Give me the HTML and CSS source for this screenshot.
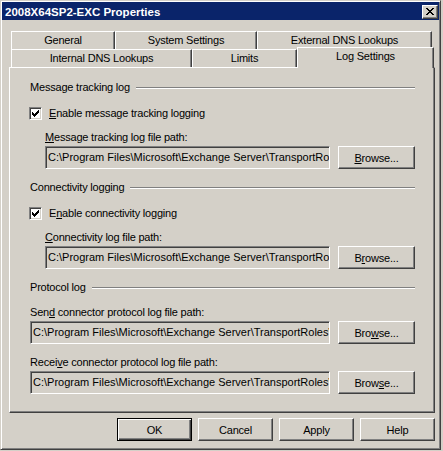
FILE: index.html
```html
<!DOCTYPE html>
<html lang="en">
  <head>
    <meta charset="UTF-8" />
    <meta name="viewport" content="width=device-width, initial-scale=1.0" />
    <title>2008X64SP2-EXC Properties</title>
    <link rel="stylesheet" href="styles.css">
  </head>
  <body>
    <div class="window">
      <div class="titlebar">
        <span class="title">2008X64SP2-EXC Properties</span>
        <span class="close">
          <svg width="8" height="7" viewBox="0 0 8 7" shape-rendering="crispEdges">
            <path d="M0 0h2v1H0z M6 0h2v1H6z M1 1h2v1H1z M5 1h2v1H5z M2 2h4v1H2z M3 3h2v1H3z M2 4h4v1H2z M1 5h2v1H1z M5 5h2v1H5z M0 6h2v1H0z M6 6h2v1H6z" fill="#000" />
          </svg>
        </span>
      </div>

      <div class="client">
        <div class="tab-row">
          <div class="tab tab-general">General</div>
          <div class="tab tab-system">System Settings</div>
          <div class="tab tab-external">External DNS Lookups</div>
        </div>
        <div class="tab-row">
          <div class="tab tab-internal">Internal DNS Lookups</div>
          <div class="tab tab-limits">Limits</div>
          <div class="tab tab-log tab-active">Log Settings</div>
        </div>

        <div class="panel">
          <div class="group">
            <div class="group-title"><span>Message tracking log</span><i class="rule"></i></div>
            <div class="check-row">
              <span class="checkbox">
                <svg width="7" height="7" viewBox="0 0 7 7" shape-rendering="crispEdges">
                  <path d="M6 0h1v1H6z M5 1h2v1H5z M0 2h1v1H0z M4 2h3v1H4z M0 3h2v1H0z M3 3h3v1H3z M0 4h5v1H0z M1 5h3v1H1z M2 6h1v1H2z" fill="#000" />
                </svg>
              </span>
              <span><u>E</u>nable message tracking logging</span>
            </div>
            <div class="indent">
              <div class="field-label"><u>M</u>essage tracking log file path:</div>
              <div class="field-row">
                <div class="field">C:\Program Files\Microsoft\Exchange Server\TransportRoles\Logs\MessageTracking</div>
                <button class="btn browse"><u>B</u>rowse...</button>
              </div>
            </div>
          </div>

          <div class="group">
            <div class="group-title"><span>Connectivity logging</span><i class="rule"></i></div>
            <div class="check-row">
              <span class="checkbox">
                <svg width="7" height="7" viewBox="0 0 7 7" shape-rendering="crispEdges">
                  <path d="M6 0h1v1H6z M5 1h2v1H5z M0 2h1v1H0z M4 2h3v1H4z M0 3h2v1H0z M3 3h3v1H3z M0 4h5v1H0z M1 5h3v1H1z M2 6h1v1H2z" fill="#000" />
                </svg>
              </span>
              <span>E<u>n</u>able connectivity logging</span>
            </div>
            <div class="indent">
              <div class="field-label"><u>C</u>onnectivity log file path:</div>
              <div class="field-row">
                <div class="field">C:\Program Files\Microsoft\Exchange Server\TransportRoles\Logs\Connectivity</div>
                <button class="btn browse">B<u>r</u>owse...</button>
              </div>
            </div>
          </div>

          <div class="group">
            <div class="group-title"><span>Protocol log</span><i class="rule"></i></div>
            <div class="field-label label-first">Sen<u>d</u> connector protocol log file path:</div>
            <div class="field-row">
              <div class="field">C:\Program Files\Microsoft\Exchange Server\TransportRoles\Logs\ProtocolLog\SmtpSend</div>
              <button class="btn browse">Bro<u>w</u>se...</button>
            </div>
            <div class="field-label label-next">Recei<u>v</u>e connector protocol log file path:</div>
            <div class="field-row">
              <div class="field">C:\Program Files\Microsoft\Exchange Server\TransportRoles\Logs\ProtocolLog\SmtpReceive</div>
              <button class="btn browse">Brow<u>s</u>e...</button>
            </div>
          </div>
        </div>

        <div class="actions">
          <button class="btn btn-default">OK</button>
          <button class="btn">Cancel</button>
          <button class="btn">Apply</button>
          <button class="btn">Help</button>
        </div>
      </div>
    </div>
  </body>
</html>
```

FILE: styles.css
```css
body {
  margin: 0;
  background-color: #d4d0c8;
  font-family: "Liberation Sans", Arial, sans-serif;
  font-size: 11px;
  letter-spacing: -0.2px;
  color: #000;
}

.window {
  box-sizing: border-box;
  width: 441px;
  height: 450px;
  padding: 1px;
  border-top: 1px solid #d4d0c8;
  border-left: 1px solid #d4d0c8;
  border-right: 1px solid #404040;
  border-bottom: 1px solid #404040;
  box-shadow: inset 1px 1px #fff, inset -1px -1px #808080;
}

/* title bar */
.titlebar {
  display: flex;
  align-items: flex-start;
  height: 18px;
  background-color: #0a246a;
}

.title {
  padding: 1px 0 0 3px;
  line-height: 18px;
  font-size: 11.5px;
  font-weight: bold;
  letter-spacing: 0;
  color: #fff;
}

.close {
  box-sizing: border-box;
  display: flex;
  width: 16px;
  height: 14px;
  margin: 3px 1px 0 auto;
  padding: 2px 0 0 3px;
  background-color: #d4d0c8;
  border: 1px solid;
  border-color: #fff #404040 #404040 #fff;
  box-shadow: inset -1px -1px #808080;
}

.client {
  padding: 11px 0 0 7px;
}

/* tabs */
.tab-row {
  display: flex;
  align-items: flex-start;
  height: 18px;
  margin-left: 2px;
}

.tab {
  box-sizing: border-box;
  height: 18px;
  border-top: 1px solid #fff;
  border-left: 1px solid #fff;
  border-right: 1px solid #404040;
  box-shadow: inset -1px 0 #808080;
  line-height: 17px;
  text-align: center;
  white-space: nowrap;
}

.tab-general { width: 104px; }
.tab-system { width: 142px; }
.tab-external { width: 175px; }
.tab-internal { width: 181px; }
.tab-limits { width: 105px; }
.tab-log { width: 137px; }

.tab-active {
  position: relative;
  z-index: 1;
  height: 21px;
  margin-top: -2px;
  background-color: #d4d0c8;
}

/* page */
.panel {
  box-sizing: border-box;
  width: 426px;
  height: 346px;
  padding: 13px 19px 0 20px;
  border-top: 1px solid #fff;
  border-left: 1px solid #fff;
  border-right: 1px solid #404040;
  border-bottom: 1px solid #404040;
  box-shadow: inset -1px -1px #808080;
}

.group + .group {
  margin-top: 12px;
}

.group-title {
  display: flex;
  align-items: center;
  height: 13px;
  line-height: 13px;
}

.rule {
  flex: 1;
  margin-left: 6px;
  border-top: 1px solid #808080;
  border-bottom: 1px solid #fff;
}

.check-row {
  display: flex;
  align-items: center;
  height: 13px;
  margin: 13px 0 0 -1px;
  line-height: 13px;
}

.checkbox {
  box-sizing: border-box;
  display: flex;
  width: 13px;
  height: 13px;
  margin-right: 7px;
  padding: 2px 0 0 2px;
  background-color: #fff;
  border: 1px solid;
  border-color: #808080 #fff #fff #808080;
  box-shadow: inset 1px 1px #404040, inset -1px -1px #d4d0c8;
}

.indent {
  margin: 11px 0 0 15px;
}

.field-label {
  height: 13px;
  line-height: 13px;
  margin-bottom: 2px;
}

.label-first {
  margin-top: 12px;
}

.label-next {
  margin-top: 12px;
}

.field-row {
  display: flex;
  gap: 8px;
}

.field {
  box-sizing: border-box;
  flex: 1;
  min-width: 0;
  height: 23px;
  padding: 0 2px;
  overflow: hidden;
  white-space: nowrap;
  line-height: 21px;
  letter-spacing: 0;
  border: 1px solid;
  border-color: #808080 #fff #fff #808080;
  box-shadow: inset 1px 1px #404040, inset -1px -1px #d4d0c8;
}

/* buttons */
.btn {
  box-sizing: border-box;
  width: 75px;
  height: 23px;
  padding: 0;
  background-color: #d4d0c8;
  font-family: inherit;
  font-size: 11px;
  letter-spacing: -0.2px;
  color: #000;
  border: 1px solid;
  border-color: #fff #404040 #404040 #fff;
  border-radius: 0;
  box-shadow: inset -1px -1px #808080;
}

.browse {
  width: 77px;
}

.btn-default {
  border-color: #000;
  box-shadow: inset 1px 1px #fff, inset -1px -1px #404040, inset -2px -2px #808080;
}

.actions {
  display: flex;
  justify-content: flex-end;
  gap: 6px;
  width: 426px;
  margin-top: 5px;
}
```
